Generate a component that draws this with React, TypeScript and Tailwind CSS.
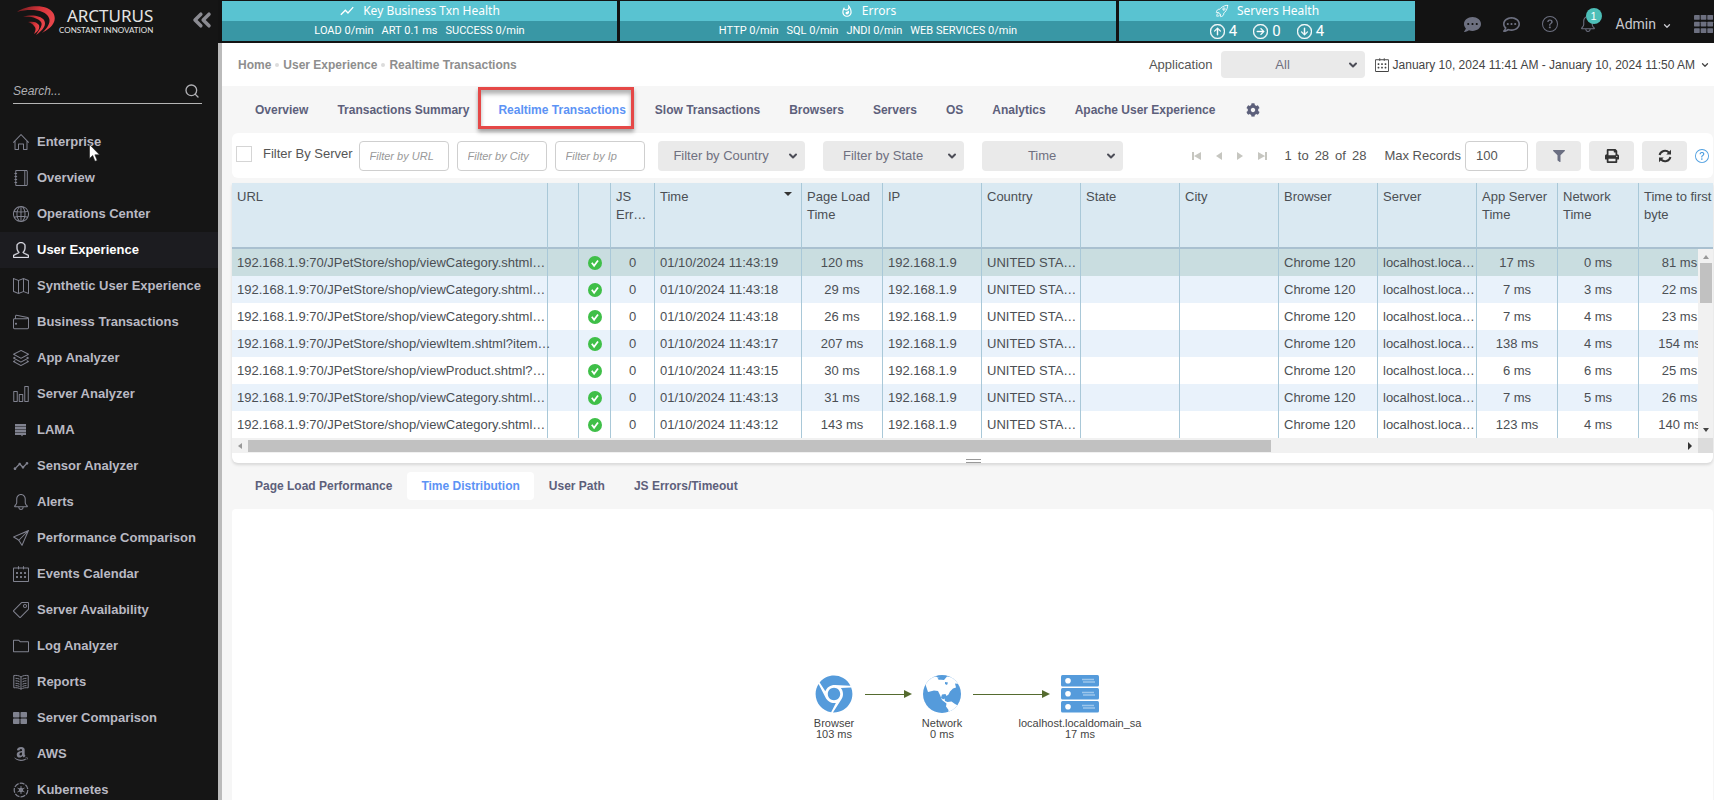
import React from "react";
import { ChevronDown, ChevronsLeft, Search } from "lucide-react";
import {
  SlHome, SlNotebook, SlGlobe, SlUser, SlMap, SlWallet, SlLayers, SlChart, SlBell,
  SlPaperPlane, SlCalender, SlTag, SlFolder,
} from "react-icons/sl";
import { FaAmazon, FaChrome, FaCog, FaCommentDots, FaFilter, FaPrint, FaRegCommentDots } from "react-icons/fa";
import { MdOutlineWhatshot, MdShowChart, MdTimeline } from "react-icons/md";
import { BsArrowDownCircle, BsArrowRightCircle, BsArrowUpCircle, BsQuestionCircle } from "react-icons/bs";
import { IoRocketOutline } from "react-icons/io5";

type IconType = React.ComponentType<{ className?: string }>;

const LamaIcon: IconType = ({ className }) => (
  <svg viewBox="0 0 16 16" className={className} fill="currentColor" aria-hidden="true">
    <path d="M2 2h11v2.4H2zM2 5h11v2.4H2zM2 8h11v2.4H2zM2 11h11v2H10l-1 1.5L8 13H2z" />
  </svg>
);

const ReportIcon: IconType = ({ className }) => (
  <svg viewBox="0 0 16 16" className={className} fill="none" stroke="currentColor" aria-hidden="true">
    <path d="M8 3C6 1.5 3.5 1.2 .8 1.5v12.3c2.700-.3 5.200 0 7.200 1.400 2-1.400 4.500-1.700 7.200-1.400V1.500C12.500 1.200 10 1.500 8 3zv12.200" />
    <path d="M2.500 4.300c1.500 0 2.800.2 4 .9M2.500 6.800c1.500 0 2.800.2 4 .9M2.500 9.300c1.500 0 2.800.2 4 .9M2.500 11.600c1.500 0 2.800.2 4 .9M13.500 4.300c-1.500 0-2.800.2-4 .9M13.500 6.800c-1.500 0-2.800.2-4 .9M13.500 9.300c-1.500 0-2.800.2-4 .9M13.500 11.600c-1.500 0-2.800.2-4 .9" />
  </svg>
);

const TilesIcon: IconType = ({ className }) => (
  <svg viewBox="0 0 16 16" className={className} fill="currentColor" aria-hidden="true">
    <rect x="0" y="2" width="6.500" height="5.500" rx=".8" />
    <rect x="7.500" y="2" width="6.500" height="5.500" rx=".8" />
    <rect x="0" y="8.500" width="6.500" height="5.500" rx=".8" />
    <rect x="7.500" y="8.500" width="6.500" height="5.500" rx=".8" />
  </svg>
);

const KubernetesIcon: IconType = ({ className }) => (
  <svg viewBox="0 0 16 16" className={className} fill="none" stroke="currentColor" aria-hidden="true">
    <circle cx="8" cy="8" r="6.800" strokeWidth="1.200" strokeDasharray="5 1.100" />
    <circle cx="8" cy="8" r="1.500" strokeWidth="1.500" />
    <path d="M8 4v8M4.500 6l7 4M11.500 6l-7 4" strokeWidth=".9" />
  </svg>
);

const NineDots: IconType = ({ className }) => (
  <svg viewBox="0 0 21 20" className={className} fill="currentColor" aria-hidden="true">
    {[0, 7, 14].map((y) => [0, 7, 14].map((x) => <rect key={`${x}-${y}`} x={x} y={y} width="6" height="5" rx=".5" />))}
  </svg>
);

const RefreshIcon: IconType = ({ className }) => (
  <svg viewBox="0 0 14 14" className={className} fill="none" stroke="currentColor" strokeWidth="2" aria-hidden="true">
    <path d="M1.600 6A5.500 5.500 0 0 1 11 3.500M12.400 8A5.500 5.500 0 0 1 3 10.500" />
    <path d="M13 .8v4.700H8.300zM1 13.200V8.500h4.700z" fill="currentColor" stroke="none" />
  </svg>
);

const CheckBadge = () => (
  <svg viewBox="0 0 14 14" className="inline-block size-3.5" role="img" aria-label="OK">
    <circle cx="7" cy="7" r="7" fill="#3fbf48" />
    <path d="M3.800 6.800l2.300 2.900L10 4.500" fill="none" stroke="#fff" strokeWidth="1.800" />
  </svg>
);

const GlobeIcon = () => (
  <svg viewBox="0 0 38 38" className="size-[38px]" aria-hidden="true">
    <clipPath id="globe"><circle cx="19" cy="19" r="19" /></clipPath>
    <g clipPath="url(#globe)">
      <rect width="38" height="38" fill="#559bdb" />
      <path
        fill="#fff"
        d="M2 8l5-4.500 5-2 5 1-2 2 6 .5 3-3.500 6 1 8 6-2 .5-4-.5 1 4-3 1-3 3-1.500 3-2 1.500-1-2-3.500.5-1 3 2 2 1.500-1 .5 2.500 2.500 1 4-.5 3.500 2.500 3 1.500-1.500 4-2.500 2.500-2 3-3.500 3-.5-3 .5-5-2.500-3.500.5-3-4.500-3.500-2-5-2-4-4-.5-6 1.500z"
      />
      <path fill="#559bdb" d="M14 2.500l4-.5 1 1.500-3 1zM22 7l3 .5-1 2.500-2-1z" />
    </g>
  </svg>
);

const ServerIcon = () => (
  <svg viewBox="0 0 38 38" className="size-[38px]" aria-hidden="true">
    {[0, 13, 26].map((y) => (
      <g key={y}>
        <rect x="0" y={y} width="38" height="11.500" rx="1.500" fill="#559bdb" />
        <circle cx="7" cy={y + 5.700} r="2.800" fill="#fff" />
        <path d={`M21 ${y + 4.500}h12M22 ${y + 7}h12`} stroke="#9cc6ec" strokeWidth="1.600" />
      </g>
    ))}
  </svg>
);

const LogoMark = () => (
  <svg viewBox="0 0 38 30" className="h-[30px] w-[38px] shrink-0" aria-hidden="true">
    <defs>
      <linearGradient id="mark" x1="0" y1="0" x2="1" y2="0.300">
        <stop offset="0" stopColor="#6a1a1d" />
        <stop offset=".6" stopColor="#d8343a" />
        <stop offset="1" stopColor="#e8454a" />
      </linearGradient>
    </defs>
    <g fill="url(#mark)">
      <path d="M0 6C8 0 22-1 30 2c7 3 9 9 7 14-2 5-7 8-12 11 5-5 9-10 7-15C29 4 14 2 0 6z" />
      <path d="M6 11c8-3 18-1 21 3 3 5-1 10-8 15 4-6 7-10 5-13-3-4-10-6-18-5z" />
      <path d="M11 16c5-1 9 0 11 3 1 4-1 6-5 9 2-4 2-6 0-8-1-2-3-3-6-4z" />
    </g>
  </svg>
);

const menu: [string, IconType][] = [
  ["Enterprise", SlHome],
  ["Overview", SlNotebook],
  ["Operations Center", SlGlobe],
  ["User Experience", SlUser],
  ["Synthetic User Experience", SlMap],
  ["Business Transactions", SlWallet],
  ["App Analyzer", SlLayers],
  ["Server Analyzer", SlChart],
  ["LAMA", LamaIcon],
  ["Sensor Analyzer", MdTimeline],
  ["Alerts", SlBell],
  ["Performance Comparison", SlPaperPlane],
  ["Events Calendar", SlCalender],
  ["Server Availability", SlTag],
  ["Log Analyzer", SlFolder],
  ["Reports", ReportIcon],
  ["Server Comparison", TilesIcon],
  ["AWS", FaAmazon],
  ["Kubernetes", KubernetesIcon],
];

const tabs = [
  "Overview", "Transactions Summary", "Realtime Transactions", "Slow Transactions", "Browsers",
  "Servers", "OS", "Analytics", "Apache User Experience",
];

const columns: { label: string; width: number; sorted?: boolean }[] = [
  { label: "URL", width: 316 },
  { label: "", width: 31 },
  { label: "", width: 32 },
  { label: "JS Err…", width: 44 },
  { label: "Time", width: 147, sorted: true },
  { label: "Page Load Time", width: 81 },
  { label: "IP", width: 99 },
  { label: "Country", width: 99 },
  { label: "State", width: 99 },
  { label: "City", width: 99 },
  { label: "Browser", width: 99 },
  { label: "Server", width: 99 },
  { label: "App Server Time", width: 81 },
  { label: "Network Time", width: 81 },
  { label: "Time to first byte", width: 82 },
];

const rows = [
  ["viewCategory.shtml…", "19", "120 ms", "17 ms", "0 ms", "81 ms"],
  ["viewCategory.shtml…", "18", "29 ms", "7 ms", "3 ms", "22 ms"],
  ["viewCategory.shtml…", "18", "26 ms", "7 ms", "4 ms", "23 ms"],
  ["viewItem.shtml?item…", "17", "207 ms", "138 ms", "4 ms", "154 ms"],
  ["viewProduct.shtml?…", "15", "30 ms", "6 ms", "6 ms", "25 ms"],
  ["viewCategory.shtml…", "13", "31 ms", "7 ms", "5 ms", "26 ms"],
  ["viewCategory.shtml…", "12", "143 ms", "123 ms", "4 ms", "140 ms"],
];

function Sidebar() {
  return (
    <aside className="flex w-[218px] shrink-0 flex-col bg-[#151515]">
      <div className="flex h-[43px] shrink-0 items-start pt-1.5 pl-[17px]">
        <LogoMark />
        <div className="ml-1 flex flex-col items-end text-[#e4e4e4]">
          <span className="font-['Noto_Sans',sans-serif] text-[17px] leading-5">ARCTURUS</span>
          <span className="font-[Lato,sans-serif] text-[8px] leading-[9px] whitespace-nowrap">CONSTANT INNOVATION</span>
        </div>
        <button aria-label="Collapse menu" className="ml-auto pr-0.5 text-[#8b8b92]">
          <ChevronsLeft className="size-7" strokeWidth={3} />
        </button>
      </div>
      <label className="mr-4 mb-5 ml-[13px] mt-9 flex h-[25px] shrink-0 items-center border-b border-[#b5b5b5]">
        <input aria-label="Search" placeholder="Search..." className="min-w-0 flex-1 bg-transparent text-[12px] text-white italic outline-none placeholder:text-[#b0b0b4]" />
        <Search className="mr-0.5 size-4 text-[#b0b0b4]" strokeWidth={2} />
      </label>
      <nav aria-label="Main">
        {menu.map(([label, Icon]) => (
          <a
            key={label}
            href="#"
            className={
              label === "User Experience"
                ? "flex h-9 items-center gap-2 bg-[#1c1c20] pl-[13px] text-[13px] font-bold text-white"
                : "flex h-9 items-center gap-2 pl-[13px] text-[13px] font-bold text-[#b9b9c3]"
            }
          >
            <Icon className={label === "User Experience" ? "size-4 stroke-[20] text-[#dcdce4]" : "size-4 text-[#80828f]"} />
            {label}
          </a>
        ))}
      </nav>
    </aside>
  );
}

function Widget({ icon, title, grow, children }: { icon: React.ReactNode; title: string; grow: string; children: React.ReactNode }) {
  return (
    <section className={`${grow} flex flex-col text-white`}>
      <h2 className="flex h-5 items-center justify-center gap-2 bg-[#59c3d1] font-['Noto_Sans',sans-serif] text-[12px]">
        {icon}
        {title}
      </h2>
      <div className="flex h-5 items-center justify-center gap-2 bg-[#3997a5] font-[Roboto,sans-serif] text-[11px] whitespace-nowrap">{children}</div>
    </section>
  );
}

function Header() {
  return (
    <header className="flex h-[43px] shrink-0 bg-[#131313] pt-px pl-1">
      <div className="flex w-[1193px] shrink gap-[3px]">
        <Widget grow="flex-[395]" title="Key Business Txn Health" icon={<MdShowChart className="size-4" />}>
          <span>LOAD 0/min</span><span>ART 0.1 ms</span><span>SUCCESS 0/min</span>
        </Widget>
        <Widget grow="flex-[496]" title="Errors" icon={<MdOutlineWhatshot className="size-3.5" />}>
          <span>HTTP 0/min</span><span>SQL 0/min</span><span>JNDI 0/min</span><span>WEB SERVICES 0/min</span>
        </Widget>
        <Widget grow="flex-[296]" title="Servers Health" icon={<IoRocketOutline className="size-3.5" />}>
          <div className="flex gap-4 text-[15px]">
            <span className="flex items-center gap-1"><BsArrowUpCircle className="size-[15px] stroke-[0.5]" />4</span>
            <span className="flex items-center gap-1"><BsArrowRightCircle className="size-[15px] stroke-[0.5]" />0</span>
            <span className="flex items-center gap-1"><BsArrowDownCircle className="size-[15px] stroke-[0.5]" />4</span>
          </div>
        </Widget>
      </div>
      <div className="ml-auto flex shrink-0 items-center pt-1 text-[#6d7080]">
        <button aria-label="Messages" className="mr-[22px]"><FaCommentDots className="size-[17px]" /></button>
        <button aria-label="Feedback" className="mr-[22px]"><FaRegCommentDots className="size-[17px]" /></button>
        <button aria-label="Help" className="mr-[22px]"><BsQuestionCircle className="size-4" /></button>
        <button aria-label="Notifications" className="relative mr-5">
          <SlBell className="size-4" />
          <span className="absolute -top-2 left-1.5 flex size-4 items-center justify-center rounded-full bg-[#4dbfb8] text-[11px] text-white">1</span>
        </button>
        <button className="mr-[22px] flex items-center gap-1.5 font-[Roboto,sans-serif] text-[14px] text-[#c9c9cf]">
          Admin
          <ChevronDown className="mt-1 size-2.5" strokeWidth={3} />
        </button>
        <button aria-label="Apps"><NineDots className="h-[19px] w-5" /></button>
      </div>
    </header>
  );
}

function Dropdown({ label, text, className }: { label: string; text: string; className: string }) {
  return (
    <div className={`${className} relative flex items-center rounded bg-[#eaeaea] text-[13px] text-[#6f7080]`}>
      <select aria-label={label} className="h-full w-full appearance-none bg-transparent pr-5 outline-none [text-align-last:center]">
        <option>{text}</option>
      </select>
      <ChevronDown className="pointer-events-none absolute right-1.5 size-3 text-[#4c4d57]" strokeWidth={4} />
    </div>
  );
}

function Breadcrumbs() {
  return (
    <div className="flex h-[43px] shrink-0 items-center bg-white pr-1 pl-4 text-[12px]">
      <nav aria-label="Breadcrumb" className="flex items-center gap-1 font-bold text-[#8e8e8e]">
        <a href="#">Home</a>
        <span className="size-1 rounded-full bg-[#dcdcdc]" />
        <a href="#">User Experience</a>
        <span className="size-1 rounded-full bg-[#dcdcdc]" />
        <a href="#">Realtime Transactions</a>
      </nav>
      <span className="mr-2 ml-auto text-[13px] text-[#555]">Application</span>
      <Dropdown label="Application" text="All" className="h-[27px] w-36" />
      <button className="ml-2.5 flex items-center gap-1 text-[12px] text-[#444]">
        <SlCalender className="size-3.5" />
        January 10, 2024 11:41 AM - January 10, 2024 11:50 AM
        <ChevronDown className="ml-px size-2.5" strokeWidth={3} />
      </button>
    </div>
  );
}

function PageTabs() {
  return (
    <div className="flex h-[47px] shrink-0 items-center gap-px bg-[#f6f6f6] pl-[19px] text-[12px] font-bold text-[#5d607b]">
      {tabs.map((t) =>
        t === "Realtime Transactions" ? (
          <div key={t} className="relative">
            <div className="pointer-events-none absolute -top-1 right-1.5 bottom-0 -left-1.5 border-3 border-[#e54847] bg-white shadow-[0_3px_4px_rgba(0,0,0,0.35),inset_0_4px_4px_rgba(0,0,0,0.3)]" />
            <a href="#" className="relative flex h-[38px] items-center px-3.5 text-[#5c93f5]">{t}</a>
          </div>
        ) : (
          <a key={t} href="#" className="px-3.5">{t}</a>
        ),
      )}
      <button aria-label="Settings" className="px-4"><FaCog className="size-3.5" /></button>
    </div>
  );
}

const textBox = "h-[30px] rounded border border-[#cfcfcf] bg-white outline-none placeholder:text-[#999]";

function FilterBar() {
  return (
    <div className="flex h-[45px] shrink-0 items-center rounded-md bg-white pr-1 pl-1 text-[13px] text-[#555]">
      <label className="mr-1.5 flex items-center gap-[11px] pb-1 whitespace-nowrap">
        <input type="checkbox" className="size-4 appearance-none border border-[#d5d5d5] bg-white" />
        Filter By Server
      </label>
      <div className="mr-[13px] flex gap-2">
        {["Filter by URL", "Filter by City", "Filter by Ip"].map((p) => (
          <input key={p} aria-label={p} placeholder={p} className={`${textBox} w-[90px] px-2.5 text-[11px] italic`} />
        ))}
      </div>
      <div className="flex gap-[18px]">
        <Dropdown label="Country" text="Filter by Country" className="h-[30px] w-[147px]" />
        <Dropdown label="State" text="Filter by State" className="h-[30px] w-[141px]" />
        <Dropdown label="Time" text="Time" className="h-[30px] w-[141px]" />
      </div>
      <div className="ml-auto flex items-center whitespace-nowrap">
        <div className="mr-[18px] flex gap-[13px] text-[#c6c6c0]">
          <button aria-label="First page"><svg viewBox="0 0 9 10" className="h-2.5 w-[9px]" fill="currentColor"><path d="M0 1h2v8H0zM9 1v8L2 5z" /></svg></button>
          <button aria-label="Previous page"><svg viewBox="0 0 9 10" className="h-2.5 w-[9px]" fill="currentColor"><path d="M8 1v8L2 5z" /></svg></button>
          <button aria-label="Next page"><svg viewBox="0 0 9 10" className="h-2.5 w-[9px]" fill="currentColor"><path d="M1 1v8l6-4z" /></svg></button>
          <button aria-label="Last page"><svg viewBox="0 0 9 10" className="h-2.5 w-[9px]" fill="currentColor"><path d="M7 1h2v8H7zM0 1v8l7-4z" /></svg></button>
        </div>
        <span className="mr-[18px] flex gap-1.5"><span>1</span><span>to</span><span>28</span><span>of</span><span>28</span></span>
        <label className="flex items-center gap-1">
          Max Records
          <input defaultValue="100" className={`${textBox} w-[63px] px-2.5 text-[13px]`} />
        </label>
        <div className="ml-2 flex gap-2">
          <button aria-label="Filter" className="flex h-[30px] w-[45px] items-center justify-center rounded bg-[#eaeaea] text-[#6b6f82]"><FaFilter className="size-3" /></button>
          <button aria-label="Print" className="flex h-[30px] w-[45px] items-center justify-center rounded bg-[#eaeaea] text-[#333]"><FaPrint className="size-3.5" /></button>
          <button aria-label="Refresh" className="flex h-[30px] w-[45px] items-center justify-center rounded bg-[#eaeaea] text-[#333]"><RefreshIcon className="size-3.5" /></button>
        </div>
        <button aria-label="Help" className="ml-2 text-[#4f9fe0]"><BsQuestionCircle className="size-3.5" /></button>
      </div>
    </div>
  );
}

const Triangle = ({ d, className }: { d: string; className: string }) => (
  <svg viewBox="0 0 8 8" className={`size-2 ${className}`} fill="currentColor" aria-hidden="true"><path d={d} /></svg>
);

const plainCell = "border-r border-[#a9c8d8] pl-[5px] whitespace-nowrap";
const centerCell = "border-r border-[#a9c8d8] text-center whitespace-nowrap";

function TransactionTable() {
  return (
    <div className="relative overflow-hidden rounded-b-md bg-white pb-2.5 shadow-[0_2px_3px_rgba(0,0,0,0.12)]">
      <table className="w-[1489px] table-fixed border-separate border-spacing-0 text-[13px] text-[#4b4f54]">
        <colgroup>
          {columns.map((c, i) => <col key={i} style={{ width: c.width }} />)}
        </colgroup>
        <thead>
          <tr className="h-[66px] bg-[#dae9f2] text-left align-top">
            {columns.map((c, i) => (
              <th key={i} scope="col" className="border-r border-b-2 border-r-[#a9c8d8] border-b-[#a9c0d0] px-[5px] pt-[5px] leading-[18px] font-normal">
                <span className="flex justify-between">
                  {c.label}
                  {c.sorted && <Triangle d="M0 2h8L4 6z" className="mt-0.5 mr-1 text-[#333]" />}
                </span>
              </th>
            ))}
          </tr>
        </thead>
        <tbody>
          {rows.map(([url, sec, load, app, net, first], i) => (
            <tr key={i} className={i === 0 ? "h-[27px] bg-[#c9dde0]" : i % 2 ? "h-[27px] bg-[#e9f2fb]" : "h-[27px] bg-white"}>
              <td className={plainCell}>192.168.1.9:70/JPetStore/shop/{url}</td>
              <td className={plainCell} />
              <td className={centerCell}><CheckBadge /></td>
              <td className={centerCell}>0</td>
              <td className={plainCell}>01/10/2024 11:43:{sec}</td>
              <td className={centerCell}>{load}</td>
              <td className={plainCell}>192.168.1.9</td>
              <td className={plainCell}>UNITED STA…</td>
              <td className={plainCell} />
              <td className={plainCell} />
              <td className={plainCell}>Chrome 120</td>
              <td className={plainCell}>localhost.loca…</td>
              <td className={centerCell}>{app}</td>
              <td className={centerCell}>{net}</td>
              <td className={centerCell}>{first}</td>
            </tr>
          ))}
        </tbody>
      </table>
      <div className="absolute top-[66px] right-0 flex h-[189px] w-[15px] flex-col items-center bg-[#f1f1f1] pt-1">
        <Triangle d="M1 6h6L4 2z" className="text-[#999]" />
        <div className="mt-0.5 h-10 w-3 bg-[#c1c1c1]" />
        <Triangle d="M1 2h6L4 6z" className="mt-auto mb-1 text-[#444]" />
      </div>
      <div className="flex h-[15px] bg-[#f1f1f1]">
        <div className="flex flex-1 items-center pr-1">
          <Triangle d="M6 1v6L2 4z" className="mx-1 text-[#999]" />
          <div className="h-3 w-[70%] bg-[#c1c1c1]" />
          <Triangle d="M2 0v8l4-4z" className="ml-auto text-[#333]" />
        </div>
        <div className="w-[15px] bg-[#dcdcdc]" />
      </div>
    </div>
  );
}

function Arrow({ length, className }: { length: string; className: string }) {
  return (
    <div className={`${className} ${length} absolute flex items-center`}>
      <div className="h-px flex-1 bg-[#556b2f]" />
      <svg viewBox="0 0 8 8" className="size-2" fill="#556b2f" aria-hidden="true"><path d="M0 0l8 4-8 4z" /></svg>
    </div>
  );
}

function Node({ name, time, className, children }: { name: string; time: string; className: string; children: React.ReactNode }) {
  return (
    <figure className={`${className} absolute flex w-32 -translate-x-1/2 flex-col items-center text-[#559bdb]`}>
      {children}
      <figcaption className="mt-[5px] text-center text-[11px] leading-[11px] text-[#444]">
        {name}<br />{time}
      </figcaption>
    </figure>
  );
}

export default function App() {
  return (
    <div className="flex h-screen overflow-hidden bg-[#f6f6f6] font-['Liberation_Sans',Arial,sans-serif]">
      <Sidebar />
      <div className="flex min-w-0 flex-1 flex-col">
        <Header />
        <main className="flex min-h-0 flex-1 flex-col border-l-4 border-[#bbbbbb]">
          <Breadcrumbs />
          <PageTabs />
          <div className="flex min-h-0 flex-1 flex-col pr-px pl-2.5">
            <FilterBar />
            <div className="mt-[5px]"><TransactionTable /></div>
            <div className="relative h-0">
              <div className="absolute -top-1 left-[49%] ml-2 h-1 w-[15px] border-y border-[#999]" />
            </div>
            <nav aria-label="Transaction details" className="flex h-[46px] shrink-0 items-center gap-px pl-[9px] text-[12px] font-bold text-[#5d607b]">
              <a href="#" className="px-3.5">Page Load Performance</a>
              <a href="#" className="flex h-7 items-center rounded bg-white px-3.5 text-[#5c93f5]">Time Distribution</a>
              <a href="#" className="px-3.5">User Path</a>
              <a href="#" className="px-3.5">JS Errors/Timeout</a>
            </nav>
            <div className="relative min-h-0 flex-1 rounded-t bg-white">
              <Node name="Browser" time="103 ms" className="top-[166px] left-[602px]"><FaChrome className="size-[38px]" /></Node>
              <Arrow className="top-[181px] left-[633px]" length="w-[47px]" />
              <Node name="Network" time="0 ms" className="top-[166px] left-[710px]"><GlobeIcon /></Node>
              <Arrow className="top-[181px] left-[741px]" length="w-[77px]" />
              <Node name="localhost.localdomain_sa" time="17 ms" className="top-[166px] left-[848px]"><ServerIcon /></Node>
            </div>
          </div>
        </main>
      </div>
      <svg viewBox="0 0 11 18" className="pointer-events-none absolute top-[144px] left-[89px] h-[18px] w-[11px]" aria-hidden="true">
        <path d="M.5.500v14l3.200-3 2.300 5.800 2.200-.9-2.300-5.600h4.600z" fill="#fff" stroke="#222" strokeWidth=".6" />
      </svg>
    </div>
  );
}
